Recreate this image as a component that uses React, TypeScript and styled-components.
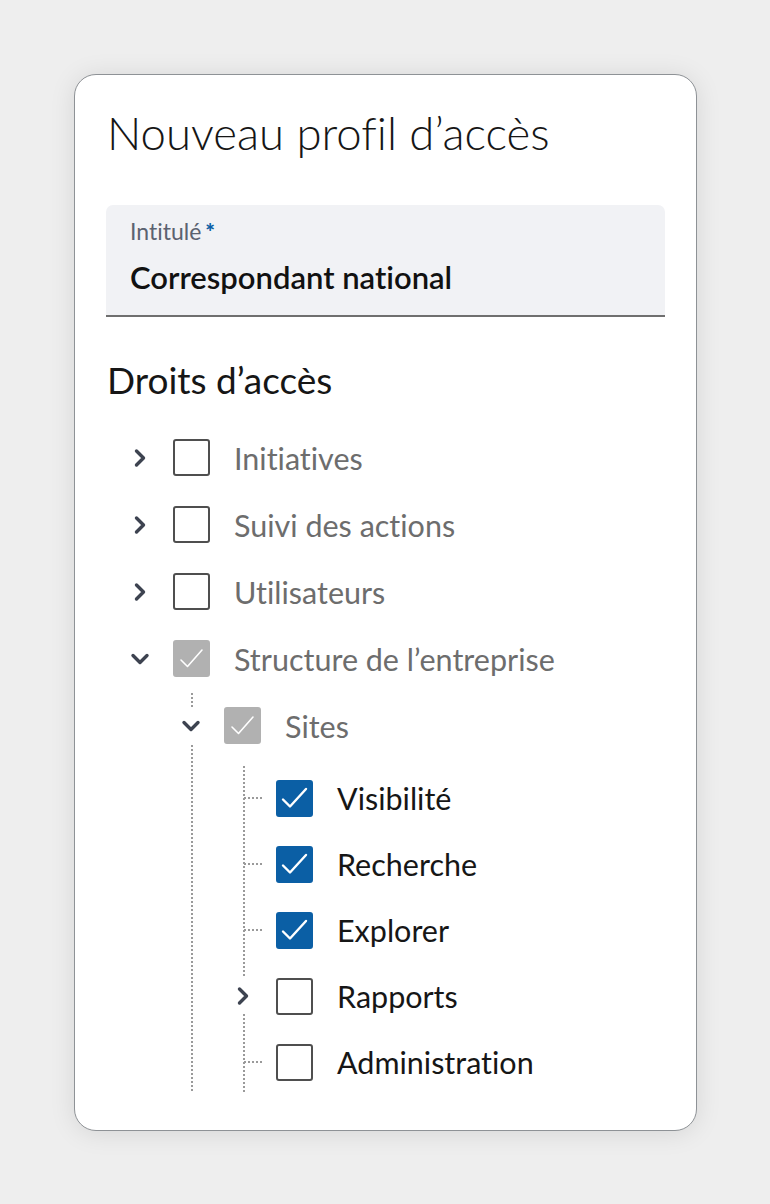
import React from 'react';
import styled, { createGlobalStyle } from 'styled-components';

const GlobalStyle = createGlobalStyle`
  html, body {
    margin: 0;
    padding: 0;
    background: #eeeeee;
  }
  body {
    font-family: Lato, "Noto Sans", sans-serif;
    font-variant-ligatures: none;
    color: #161616;
  }
  ul {
    list-style: none;
    margin: 0;
    padding: 0;
  }
`;

type CheckState = 'empty' | 'partial' | 'checked';

interface TreeNode {
  id: string;
  label: string;
  state: CheckState;
  expandable?: boolean;
  open?: boolean;
  muted?: boolean;
  children?: TreeNode[];
}

const tree: TreeNode[] = [
  { id: 'init', label: 'Initiatives', state: 'empty', expandable: true, muted: true },
  { id: 'suivi', label: 'Suivi des actions', state: 'empty', expandable: true, muted: true },
  { id: 'users', label: 'Utilisateurs', state: 'empty', expandable: true, muted: true },
  {
    id: 'struct',
    label: 'Structure de l’entreprise',
    state: 'partial',
    expandable: true,
    open: true,
    muted: true,
    children: [
      {
        id: 'sites',
        label: 'Sites',
        state: 'partial',
        expandable: true,
        open: true,
        muted: true,
        children: [
          { id: 'vis', label: 'Visibilité', state: 'checked' },
          { id: 'rech', label: 'Recherche', state: 'checked' },
          { id: 'expl', label: 'Explorer', state: 'checked' },
          { id: 'rapp', label: 'Rapports', state: 'empty', expandable: true },
          { id: 'admin', label: 'Administration', state: 'empty' },
        ],
      },
    ],
  },
];

const Page = styled.div`
  box-sizing: border-box;
  min-height: 1204px;
  padding: 74px 0 0 74px;
`;

const Card = styled.section`
  box-sizing: border-box;
  width: 623px;
  height: 1057px;
  padding: 33px 31px 0;
  background: #ffffff;
  border: 1px solid #8e9296;
  border-radius: 22px;
  box-shadow: 0 2px 26px rgba(0, 0, 0, 0.1);
`;

const Title = styled.h1`
  margin: 0 0 47px 1px;
  font-size: 45.5px;
  line-height: 50px;
  font-weight: 300;
  color: #161616;
`;

const Field = styled.div`
  box-sizing: border-box;
  height: 112px;
  padding: 14px 24px 0;
  background: #f1f2f5;
  border-bottom: 2px solid #6f6f6f;
  border-radius: 7px 7px 0 0;
`;

const FieldLabel = styled.label`
  display: block;
  font-size: 23px;
  line-height: 25px;
  color: #5b6270;
`;

const Required = styled.span`
  margin-left: 4px;
  color: #0b5fa5;
  font-weight: 900;
`;

const FieldValue = styled.div`
  margin-top: 15px;
  font-size: 31px;
  line-height: 36px;
  font-weight: 600;
  color: #111111;
`;

const SectionTitle = styled.h2`
  margin: 41px 0 22px 1px;
  font-size: 37px;
  line-height: 44px;
  font-weight: 400;
  color: #161616;
`;

const Tree = styled.ul`
  padding-left: 14px;
`;

const Group = styled.ul<{ $indent: number; $top: number }>`
  margin-left: ${({ $indent }) => $indent}px;
  padding-top: ${({ $top }) => $top}px;
  background-image: repeating-linear-gradient(to bottom, #9a9a9a 0 2px, transparent 2px 4px);
  background-repeat: no-repeat;
  background-size: 2px calc(100% - ${({ $top }) => $top + 4}px);
  background-position: 20px ${({ $top }) => $top + 1}px;
`;

const Row = styled.div<{ $height: number }>`
  display: flex;
  align-items: center;
  height: ${({ $height }) => $height}px;
`;

const Slot = styled.span<{ $stub: boolean }>`
  flex: none;
  display: flex;
  align-items: center;
  justify-content: center;
  width: 40px;
  height: 100%;
  background-image: ${({ $stub }) =>
    $stub ? 'repeating-linear-gradient(to right, #9a9a9a 0 2px, transparent 2px 4px)' : 'none'};
  background-repeat: no-repeat;
  background-size: 19px 2px;
  background-position: 21px center;
`;

const Toggle = styled.button`
  display: flex;
  align-items: center;
  justify-content: center;
  width: 26px;
  height: 36px;
  padding: 0;
  border: none;
  background: #ffffff;
  color: #3d4350;
  cursor: pointer;
`;

const Box = styled.span<{ $state: CheckState }>`
  flex: none;
  box-sizing: border-box;
  display: flex;
  align-items: center;
  justify-content: center;
  width: 37px;
  height: 37px;
  margin-left: 13px;
  border-radius: 3px;
  border: 2px solid
    ${({ $state }) => ($state === 'empty' ? '#4f4f4f' : $state === 'partial' ? '#b1b1b1' : '#0b5fa5')};
  background: ${({ $state }) =>
    $state === 'empty' ? '#ffffff' : $state === 'partial' ? '#b1b1b1' : '#0b5fa5'};
`;

const Label = styled.span<{ $muted: boolean }>`
  margin-left: 24px;
  font-size: 30.5px;
  line-height: 36px;
  white-space: nowrap;
  color: ${({ $muted }) => ($muted ? '#6d6d6d' : '#161616')};
`;

const Chevron = ({ open }: { open: boolean }) =>
  open ? (
    <svg width="20" height="14" viewBox="0 0 20 14" aria-hidden>
      <path d="M3 3.5 10 10.5l7-7" fill="none" stroke="currentColor" strokeWidth="3.4" strokeLinecap="round" strokeLinejoin="round" />
    </svg>
  ) : (
    <svg width="14" height="20" viewBox="0 0 14 20" aria-hidden>
      <path d="M3.5 3 10.5 10l-7 7" fill="none" stroke="currentColor" strokeWidth="3.4" strokeLinecap="round" strokeLinejoin="round" />
    </svg>
  );

const Check = ({ state }: { state: CheckState }) => {
  if (state === 'empty') return null;
  return (
    <svg width="33" height="33" viewBox="0 0 33 33" aria-hidden>
      <path
        d={state === 'checked' ? 'M5 17.5 12 24.5 28 7' : 'M6 18 12.5 24.5 27 8'}
        fill="none"
        stroke="#ffffff"
        strokeWidth={state === 'checked' ? 2.4 : 1.6}
        strokeLinecap="round"
        strokeLinejoin="round"
      />
    </svg>
  );
};

const TreeItem = ({ node, level }: { node: TreeNode; level: number }) => (
  <li>
    <Row $height={level === 2 ? 66 : 67}>
      <Slot $stub={level > 0 && !node.expandable}>
        {node.expandable && (
          <Toggle type="button" aria-expanded={!!node.open}>
            <Chevron open={!!node.open} />
          </Toggle>
        )}
      </Slot>
      <Box $state={node.state} role="checkbox" aria-checked={node.state === 'partial' ? 'mixed' : node.state === 'checked'}>
        <Check state={node.state} />
      </Box>
      <Label $muted={!!node.muted}>{node.label}</Label>
    </Row>
    {node.open && node.children && (
      <Group $indent={level === 0 ? 51 : 52} $top={level === 0 ? 0 : 6}>
        {node.children.map((child) => (
          <TreeItem key={child.id} node={child} level={level + 1} />
        ))}
      </Group>
    )}
  </li>
);

const App = () => (
  <Page>
    <GlobalStyle />
    <Card>
      <Title>Nouveau profil d’accès</Title>
      <Field>
        <FieldLabel>
          Intitulé
          <Required>*</Required>
        </FieldLabel>
        <FieldValue>Correspondant national</FieldValue>
      </Field>
      <SectionTitle>Droits d’accès</SectionTitle>
      <Tree>
        {tree.map((node) => (
          <TreeItem key={node.id} node={node} level={0} />
        ))}
      </Tree>
    </Card>
  </Page>
);

export default App;
